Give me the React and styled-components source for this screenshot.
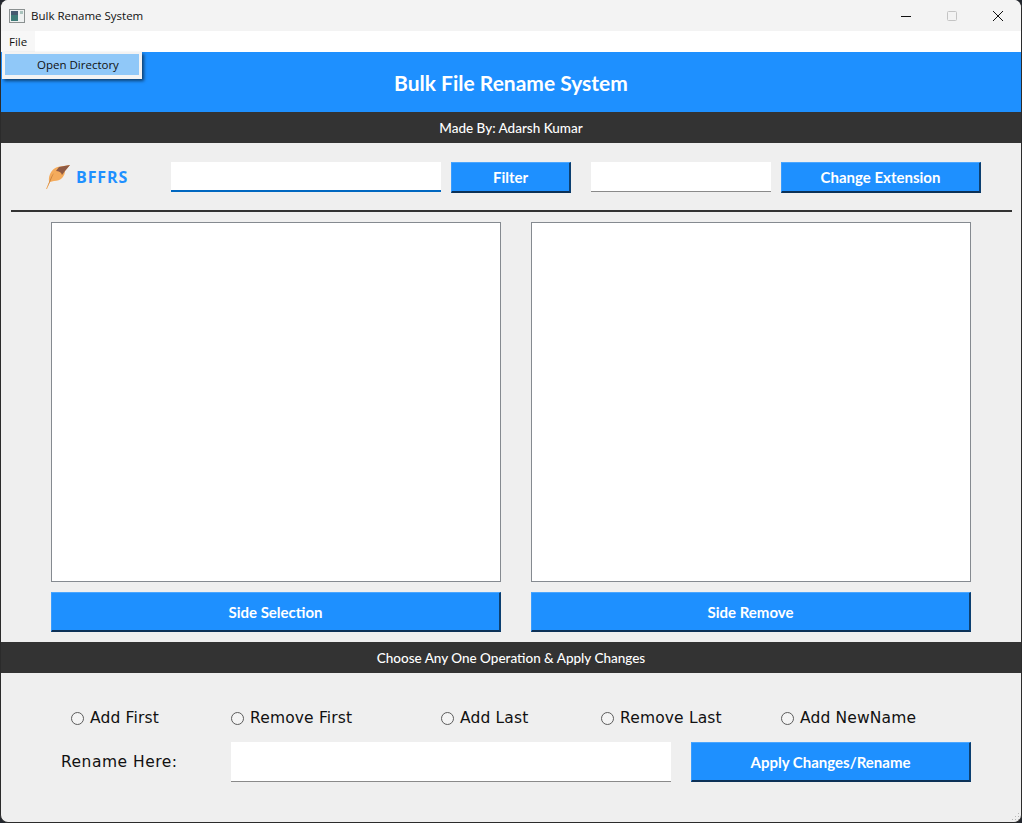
import React from "react"
import styled, { createGlobalStyle } from "styled-components"

const blue = "#1e90ff"
const dark = "#333333"

const GlobalStyle = createGlobalStyle`
  html, body {
    margin: 0;
    padding: 0;
    height: 823px;
    overflow: hidden;
    background: #23272e;
  }
  * {
    box-sizing: border-box;
  }
`

const Window = styled.div`
  position: relative;
  width: 1022px;
  height: 823px;
  background: #efefef;
  border: 1px solid #2b2b2b;
  border-top: none;
  border-radius: 8px;
  overflow: hidden;
  font-family: "Open Sans", "Liberation Sans", sans-serif;
`

const TitleBar = styled.div`
  display: flex;
  align-items: center;
  height: 31px;
  padding-left: 8px;
  background: #f3f3f3;
  font-size: 12px;
  color: #111;
`

const AppIcon = styled.svg`
  width: 16px;
  height: 16px;
  margin-right: 6px;
`

const WindowTitle = styled.span`
  flex: 1;
  font-size: 11.5px;
`

const Caption = styled.div`
  display: flex;
  justify-content: center;
  width: 46px;
`

const MenuBar = styled.div`
  display: flex;
  height: 21px;
  background: #fff;
`

const MenuItem = styled.div`
  width: 34px;
  padding: 3px 0 0 8px;
  background: #f7f7f7;
  font-size: 11.5px;
  line-height: 15px;
  color: #111;
`

const Dropdown = styled.div`
  position: absolute;
  top: 52px;
  left: 1px;
  width: 140px;
  height: 27px;
  padding: 2px 3px;
  background: #f3f3f3;
  box-shadow: 2px 2px 3px rgba(0, 0, 0, 0.55);
  z-index: 2;
`

const DropdownItem = styled.div`
  height: 21px;
  padding-left: 32px;
  background: #90c8f8;
  font-size: 11.5px;
  line-height: 22px;
  color: #111;
`

const Header = styled.header`
  display: flex;
  align-items: center;
  justify-content: center;
  height: 60px;
  background: ${blue};
  color: #fff;
  font-family: Lato, "Liberation Sans", sans-serif;
  font-size: 21px;
  font-weight: 700;
`

const Band = styled.div`
  display: flex;
  align-items: center;
  justify-content: center;
  height: 31px;
  background: ${dark};
  color: #fff;
  font-family: Lato, "Liberation Sans", sans-serif;
  font-size: 13.5px;
  font-weight: 500;
`

const ToolRow = styled.div`
  display: flex;
  align-items: flex-start;
  height: 67px;
  padding: 19px 0 0 44px;
`

const Brand = styled.div`
  display: flex;
  align-items: center;
  gap: 5px;
  width: 126px;
  height: 30px;
  color: ${blue};
  font-family: "Open Sans", "Liberation Sans", sans-serif;
  font-size: 16px;
  font-weight: 700;
  letter-spacing: 0.9px;
`

const Field = styled.div`
  width: ${(p) => p.$width}px;
  height: ${(p) => p.$height || 30}px;
  margin-right: ${(p) => p.$gap || 0}px;
  background: #fff;
  border-bottom: ${(p) => (p.$focused ? "2px solid #0067c0" : "1px solid #8a8a8a")};
`

const Button = styled.button`
  display: block;
  width: ${(p) => p.$width}px;
  height: ${(p) => p.$height || 31}px;
  margin: 0 ${(p) => p.$gap || 0}px 0 0;
  padding: 0;
  background: ${blue};
  border: none;
  border-top: 1px solid #4aa6ff;
  border-left: 1px solid #3a9dff;
  border-right: 2px solid #0c3f70;
  border-bottom: 2px solid #0c3157;
  color: #fff;
  font-family: Lato, "Liberation Sans", sans-serif;
  font-size: 15px;
  font-weight: 700;
`

const Divider = styled.div`
  height: 2px;
  margin: 0 9px 0 10px;
  background: ${dark};
`

const Panels = styled.div`
  display: grid;
  grid-template-columns: 450px 440px;
  column-gap: 30px;
  row-gap: 10px;
  padding: 10px 0 10px 50px;
`

const ListBox = styled.div`
  height: 360px;
  background: #fff;
  border: 1px solid #858a90;
`

const Operations = styled.div`
  padding: 35px 0 0 70px;
`

const RadioRow = styled.div`
  display: flex;
  height: 20px;
  align-items: center;
`

const RadioOption = styled.label`
  display: flex;
  align-items: center;
  gap: 6px;
  width: ${(p) => p.$width}px;
  font-family: "DejaVu Sans", "Liberation Sans", sans-serif;
  font-size: 15.5px;
  letter-spacing: 0.15px;
  color: #111;
`

const RadioDot = styled.span`
  width: 13px;
  height: 13px;
  border: 1px solid #5c5c5c;
  border-radius: 50%;
  background: #f4f4f4;
`

const RenameRow = styled.div`
  display: flex;
  align-items: center;
  margin: 14px 0 0 -10px;
`

const RenameLabel = styled.div`
  width: 170px;
  font-family: "DejaVu Sans", "Liberation Sans", sans-serif;
  font-size: 15.5px;
  letter-spacing: 0.5px;
  color: #111;
`

const Grip = styled.svg`
  position: absolute;
  right: 1px;
  bottom: 1px;
  width: 9px;
  height: 9px;
`

const Feather = () => (
  <svg width="26" height="24" viewBox="0 0 26 24">
    <path d="M1 24 L4 17 C3 9 8 2 15 1.5 L25 0 L20 6 C20 11 16 16 9 16 L5 17 L2 24 Z" fill="#f4ab5c" />
    <path d="M11 6 L14 2 L25 0 L20 6 L17 10 C16 7 14 6 11 6 Z" fill="#8f5a44" />
    <path d="M2 23 L5 15 C6 12 7 10 9 8 C7 12 6 15 4 19 Z" fill="#c9803c" />
  </svg>
)

const radios = [
  { label: "Add First", width: 160 },
  { label: "Remove First", width: 210 },
  { label: "Add Last", width: 160 },
  { label: "Remove Last", width: 180 },
  { label: "Add NewName", width: 160 },
]

const App = () => (
  <Window>
    <GlobalStyle />
    <TitleBar>
      <AppIcon viewBox="0 0 16 16">
        <rect x="0.5" y="1.5" width="15" height="13" fill="#eef1f1" stroke="#8a9090" />
        <rect x="2" y="3" width="7" height="10" fill="#3f7c78" />
        <rect x="2" y="3" width="7" height="4" fill="#465a70" />
        <rect x="11" y="3" width="3" height="3" fill="#a9c3bd" />
      </AppIcon>
      <WindowTitle>Bulk Rename System</WindowTitle>
      <Caption>
        <svg width="12" height="12" viewBox="0 0 12 12">
          <path d="M1 6.5 H11" stroke="#111" strokeWidth="1" />
        </svg>
      </Caption>
      <Caption>
        <svg width="12" height="12" viewBox="0 0 12 12">
          <rect x="1.5" y="1.5" width="9" height="9" rx="1" fill="none" stroke="#c4c4c4" />
        </svg>
      </Caption>
      <Caption>
        <svg width="12" height="12" viewBox="0 0 12 12">
          <path d="M1 1 L11 11 M11 1 L1 11" stroke="#111" strokeWidth="1" />
        </svg>
      </Caption>
    </TitleBar>
    <MenuBar>
      <MenuItem>File</MenuItem>
    </MenuBar>
    <Dropdown>
      <DropdownItem>Open Directory</DropdownItem>
    </Dropdown>
    <Header>Bulk File Rename System</Header>
    <Band>Made By: Adarsh Kumar</Band>
    <ToolRow>
      <Brand>
        <Feather />
        BFFRS
      </Brand>
      <Field $width={270} $gap={10} $focused />
      <Button $width={120} $gap={20}>Filter</Button>
      <Field $width={180} $gap={10} />
      <Button $width={200}>Change Extension</Button>
    </ToolRow>
    <Divider />
    <Panels>
      <ListBox />
      <ListBox />
      <Button $width={450} $height={40}>Side Selection</Button>
      <Button $width={440} $height={40}>Side Remove</Button>
    </Panels>
    <Band>Choose Any One Operation &amp; Apply Changes</Band>
    <Operations>
      <RadioRow>
        {radios.map((r) => (
          <RadioOption key={r.label} $width={r.width}>
            <RadioDot />
            {r.label}
          </RadioOption>
        ))}
      </RadioRow>
      <RenameRow>
        <RenameLabel>Rename Here:</RenameLabel>
        <Field $width={440} $height={40} $gap={20} />
        <Button $width={280} $height={40}>Apply Changes/Rename</Button>
      </RenameRow>
    </Operations>
    <Grip viewBox="0 0 9 9">
      <path d="M7 1h1v1H7z M4 4h1v1H4z M7 4h1v1H7z M1 7h1v1H1z M4 7h1v1H4z M7 7h1v1H7z" fill="#b5b5b5" />
    </Grip>
  </Window>
)

export default App
